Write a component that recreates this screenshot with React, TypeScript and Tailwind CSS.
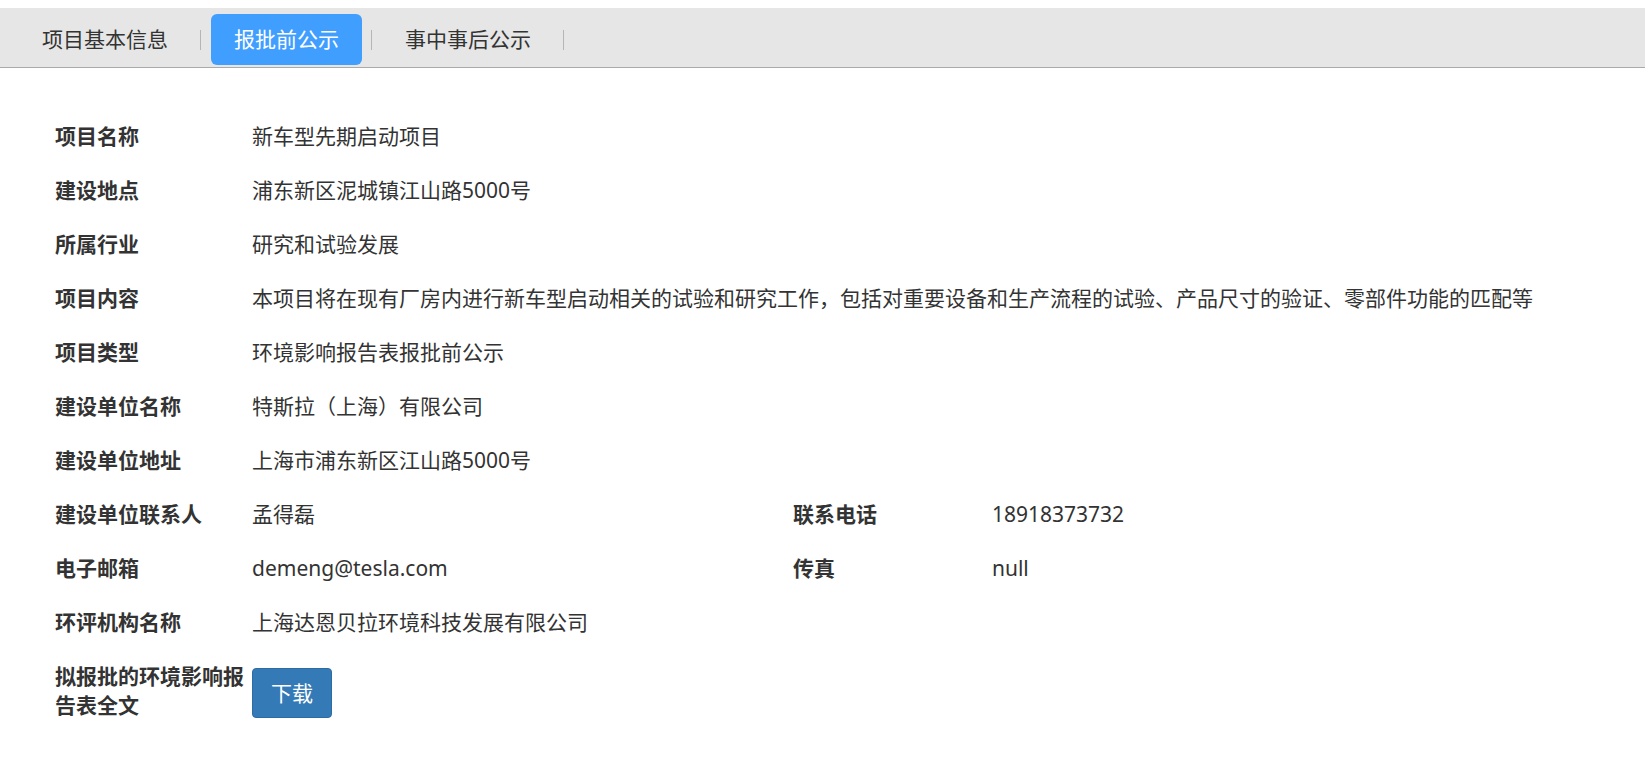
import React from 'react';

type Row = {
  label: string;
  value?: string;
  label2?: string;
  value2?: string;
};

const rows: Row[] = [
  { label: '项目名称', value: '新车型先期启动项目' },
  { label: '建设地点', value: '浦东新区泥城镇江山路5000号' },
  { label: '所属行业', value: '研究和试验发展' },
  {
    label: '项目内容',
    value:
      '本项目将在现有厂房内进行新车型启动相关的试验和研究工作，包括对重要设备和生产流程的试验、产品尺寸的验证、零部件功能的匹配等',
  },
  { label: '项目类型', value: '环境影响报告表报批前公示' },
  { label: '建设单位名称', value: '特斯拉（上海）有限公司' },
  { label: '建设单位地址', value: '上海市浦东新区江山路5000号' },
  { label: '建设单位联系人', value: '孟得磊', label2: '联系电话', value2: '18918373732' },
  { label: '电子邮箱', value: 'demeng@tesla.com', label2: '传真', value2: 'null' },
  { label: '环评机构名称', value: '上海达恩贝拉环境科技发展有限公司' },
];

const tabs = ['项目基本信息', '报批前公示', '事中事后公示'];

export default function App() {
  const active = 1;

  return (
    <div
      className="min-h-screen bg-white pt-2 text-[#333]"
      style={{ fontFamily: '"Noto Sans", "Noto Sans CJK SC", sans-serif' }}
    >
      {/* Tab bar */}
      <div className="h-[60px] border-b border-[#aaa] bg-[#e6e6e6] pl-[19px] pt-[6px]">
        <div className="flex h-[51px] items-center">
          {tabs.map((t, i) => (
            <React.Fragment key={t}>
              <div
                className={`flex h-full items-center rounded-[6px] px-[23px] text-[21px] ${
                  i === active ? 'bg-[#409eff] text-white' : 'text-[#333]'
                }`}
              >
                {t}
              </div>
              <span className="ml-[9px] mr-[10px] h-[20px] w-px bg-[#b5b5b5]" />
            </React.Fragment>
          ))}
        </div>
      </div>

      {/* Detail rows */}
      <div className="pl-[55px] pr-[55px] pt-[41px] text-[21px] leading-[30px]">
        {rows.map((r) => (
          <div key={r.label} className="grid grid-cols-[197px_541px_199px_1fr] items-center py-[12px]">
            <div className="font-bold">{r.label}</div>
            {r.label2 ? (
              <>
                <div>{r.value}</div>
                <div className="font-bold">{r.label2}</div>
                <div>{r.value2}</div>
              </>
            ) : (
              <div className="col-span-3 whitespace-nowrap">{r.value}</div>
            )}
          </div>
        ))}

        <div className="grid grid-cols-[197px_1fr] items-center pb-[12px] pt-[13px]">
          <div className="pr-2 font-bold leading-[29px]">拟报批的环境影响报告表全文</div>
          <div className="pt-[3px]">
            <button className="h-[50px] w-[80px] rounded-[4px] border border-[#2e6da4] bg-[#337ab7] text-[21px] text-white">
              下载
            </button>
          </div>
        </div>
      </div>
    </div>
  );
}
